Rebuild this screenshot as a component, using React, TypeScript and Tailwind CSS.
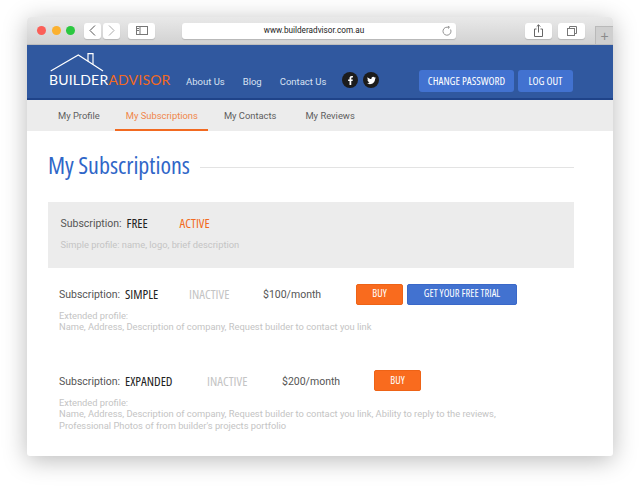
import { FaFacebookF, FaTwitter } from "react-icons/fa";

const narrow = "font-['Open_Sans',sans-serif] [font-stretch:75%]";

function ToolButton({ className, children }: { className: string; children: React.ReactNode }) {
  return (
    <div className={`h-4 bg-white rounded-[3px] shadow-[0_1px_1px_rgba(0,0,0,0.15)] flex items-center justify-center ${className}`}>
      {children}
    </div>
  );
}

function Toolbar() {
  return (
    <div className="h-[28px] bg-gradient-to-b from-[#e9e9e9] to-[#d2d2d2] border-b border-[#bdbdbd] flex items-center relative">
      <div className="flex gap-[5.500px] ml-[10px]">
        <span className="w-[9px] h-[9px] rounded-full bg-[#fb5f58]" />
        <span className="w-[9px] h-[9px] rounded-full bg-[#fbb130]" />
        <span className="w-[9px] h-[9px] rounded-full bg-[#2bc840]" />
      </div>
      <ToolButton className="w-[17px] ml-[9px]">
        <svg width="7" height="11" viewBox="0 0 7 11" fill="none" stroke="#555" strokeWidth="1"><path d="M6 .5 1 5.500l5 5" /></svg>
      </ToolButton>
      <ToolButton className="w-[17px] ml-[2px]">
        <svg width="7" height="11" viewBox="0 0 7 11" fill="none" stroke="#aaa" strokeWidth="1"><path d="M1 .5l5 5-5 5" /></svg>
      </ToolButton>
      <ToolButton className="w-[27px] ml-[8px]">
        <svg width="12" height="9" viewBox="0 0 12 9" fill="none" stroke="#777" strokeWidth="1"><rect x=".5" y=".5" width="11" height="8" /><path d="M4 .5v8" /><path d="M1 2.500h2M1 4.500h2" /></svg>
      </ToolButton>
      <ToolButton className="w-[274px] ml-[27px] pr-[10px] relative">
        <span className="text-[8.200px] text-[#222] font-['Roboto',sans-serif]">www.builderadvisor.com.au</span>
        <svg className="absolute right-[4px] top-[3px]" width="10" height="10" viewBox="0 0 10 10" fill="none" stroke="#888" strokeWidth="0.9"><path d="M8.600 3.500A4 4 0 1 1 5 1.200h2" /><path d="M6 0l1.500 1.200L6 2.600" /></svg>
      </ToolButton>
      <ToolButton className="w-[27px] ml-[69px]">
        <svg width="9" height="13" viewBox="0 0 9 13" fill="none" stroke="#666" strokeWidth="1"><path d="M2.500 5H.5v7.500h8V5h-2" /><path d="M4.500 8.500V.8M2.700 2.600 4.500.8l1.800 1.800" /></svg>
      </ToolButton>
      <ToolButton className="w-[27px] ml-[6px]">
        <svg width="10" height="10" viewBox="0 0 10 10" fill="none" stroke="#777" strokeWidth="1"><rect x=".5" y="2.500" width="7" height="7" /><path d="M2.500 2.500v-2h7v7h-2" /></svg>
      </ToolButton>
      <div className="absolute right-0 bottom-0 w-[18px] h-[18px] bg-[#cfcfcf] border-l border-t border-[#b9b9b9] flex items-center justify-center text-[#8a8a8a] text-[14px] leading-none font-['Liberation_Sans',sans-serif] font-light">
        +
      </div>
    </div>
  );
}

function Logo() {
  return (
    <div className="w-[122px] relative h-[38px] shrink-0">
      <svg className="absolute left-0 top-0" width="60" height="20" viewBox="0 0 60 20" fill="none" stroke="#fff" strokeWidth="1.2">
        <path d="M1.700 18 29.300 2 54 18" />
        <path d="M39 8.300V.6h5v10.900" />
      </svg>
      <div className="absolute left-0 top-[16px] text-[14px] leading-[22px] tracking-[0.2px] font-['Lato',sans-serif] whitespace-nowrap">
        <span className="text-white">BUILDER</span>
        <span className="text-[#f26a21]">ADVISOR</span>
      </div>
    </div>
  );
}

function Header() {
  return (
    <div className="h-[55px] bg-[#30589f] border-b-2 border-[#1f4389] flex items-start font-['Roboto',sans-serif]">
      <div className="ml-[22px] mt-[8px]"><Logo /></div>
      <nav className="flex gap-[18px] ml-[15px] mt-[30px] text-[9.500px] leading-[13px] text-[#d8e2f2] w-[151px]">
        <span>About Us</span>
        <span>Blog</span>
        <span>Contact Us</span>
      </nav>
      <div className="flex gap-[5px] ml-[5px] mt-[27px]">
        <span className="w-[16px] h-[16px] rounded-full bg-[#1c1c1c] text-white flex items-center justify-center"><FaFacebookF size={9} /></span>
        <span className="w-[16px] h-[16px] rounded-full bg-[#1c1c1c] text-white flex items-center justify-center"><FaTwitter size={9} /></span>
      </div>
      <div className={`flex gap-[4px] ml-[40px] mt-[25px] text-white text-[11px] ${narrow}`}>
        <span className="w-[95px] h-[22px] rounded-[3px] bg-[#4272d0] flex items-center justify-center whitespace-nowrap">CHANGE PASSWORD</span>
        <span className="w-[55px] h-[22px] rounded-[3px] bg-[#4272d0] flex items-center justify-center whitespace-nowrap">LOG OUT</span>
      </div>
    </div>
  );
}

function Tabs() {
  const tabs = ["My Profile", "My Subscriptions", "My Contacts", "My Reviews"];
  return (
    <div className="h-[31px] bg-[#ececec] flex text-[9.400px] font-['Roboto',sans-serif] text-[#5e5e5e] pl-[22px]">
      {tabs.map((t) => (
        <div
          key={t}
          className={
            t === "My Subscriptions"
              ? "pl-[11px] pr-[10px] pt-[9px] mr-[16px] border-b-2 border-[#f26a21] text-[#f0864a]"
              : t === "My Profile"
                ? "px-[9px] pt-[9px] mr-[6px]"
                : "pt-[9px] mr-[29px]"
          }
        >
          {t}
        </div>
      ))}
    </div>
  );
}

function Row(props: {
  name: string;
  nameWidth: string;
  status: string;
  statusWidth: string;
  price?: string;
  priceWidth?: string;
  trial?: boolean;
  lines: string[];
  className: string;
}) {
  const active = props.status === "ACTIVE";
  return (
    <div className={props.className}>
      <div className="flex items-center h-[22px] text-[10.500px]">
        <span className="text-[#555] w-[66px] pt-[2px]">Subscription:</span>
        <span className={`text-[#222] text-[13px] pt-[2px] ${narrow} ${props.nameWidth}`}>{props.name}</span>
        <span className={`text-[13px] pt-[2px] ${narrow} ${props.statusWidth} ${active ? "text-[#f26a21]" : "text-[#c4c4c4]"}`}>{props.status}</span>
        {props.price && <span className={`text-[#555] pt-[2px] ${props.priceWidth}`}>{props.price}</span>}
        {props.price && (
          <span className={`w-[47px] h-[21px] rounded-[2px] bg-[#f96b1e] border border-[#ee6316] text-white text-[10.500px] flex items-center justify-center ${narrow}`}>BUY</span>
        )}
        {props.trial && (
          <span className={`w-[110px] h-[21px] ml-[4px] rounded-[2px] bg-[#4272d0] border border-[#3a68c8] text-white text-[10.500px] flex items-center justify-center whitespace-nowrap ${narrow}`}>GET YOUR FREE TRIAL</span>
        )}
      </div>
      <div className="text-[9.330px] leading-[11.400px] text-[#c4c4c4] mt-[5px]">
        {props.lines.map((l) => (
          <div key={l}>{l}</div>
        ))}
      </div>
    </div>
  );
}

export default function App() {
  return (
    <div className="w-[640px] h-[493px] bg-white pt-[17px] pl-[27px] overflow-hidden">
      <div className="w-[586px] h-[439px] bg-white rounded-t-[4px] rounded-b-[3px] overflow-hidden shadow-[0_4px_24px_rgba(0,0,0,0.28)]">
        <Toolbar />
        <Header />
        <Tabs />
        <div className="pl-[21px] pr-[39px] font-['Roboto',sans-serif]">
          <div className="flex items-center h-[39px] mt-[16px]">
            <h1 className={`text-[24px] leading-[30px] text-[#2f66c8] shrink-0 mt-[-3px] ${narrow}`}>My Subscriptions</h1>
            <div className="flex-1 h-px bg-[#e3e3e3] ml-[10px] mt-[2px]" />
          </div>
          <Row
            className="bg-[#ececec] h-[66px] mt-[16px] pl-[12.500px] pt-[10px]"
            name="FREE"
            nameWidth="w-[53px]"
            status="ACTIVE"
            statusWidth=""
            lines={["Simple profile: name, logo, brief description"]}
          />
          <Row
            className="pl-[11px] mt-[15px]"
            name="SIMPLE"
            nameWidth="w-[64px]"
            status="INACTIVE"
            statusWidth="w-[74px]"
            price="$100/month"
            priceWidth="w-[93px]"
            trial
            lines={["Extended profile:", "Name, Address, Description of company, Request builder to contact you link"]}
          />
          <Row
            className="pl-[11px] mt-[37px]"
            name="EXPANDED"
            nameWidth="w-[82px]"
            status="INACTIVE"
            statusWidth="w-[75px]"
            price="$200/month"
            priceWidth="w-[92px]"
            lines={[
              "Extended profile:",
              "Name, Address, Description of company, Request builder to contact you link, Ability to reply to the reviews,",
              "Professional Photos of from builder's projects portfolio",
            ]}
          />
        </div>
      </div>
    </div>
  );
}
